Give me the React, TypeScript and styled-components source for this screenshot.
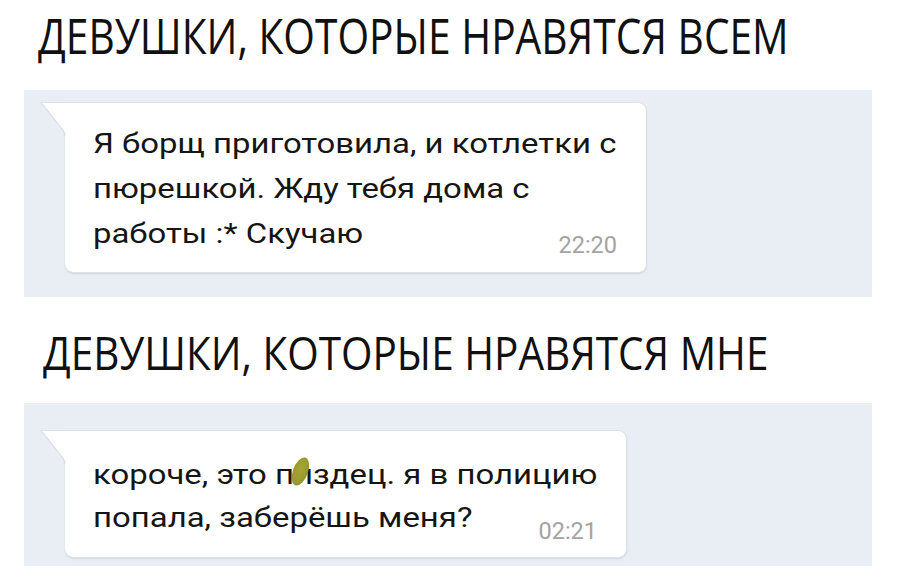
import React from "react";
import styled, { createGlobalStyle } from "styled-components";

const GlobalStyle = createGlobalStyle`
  html, body {
    margin: 0;
    padding: 0;
    background: #ffffff;
  }
  body {
    width: 898px;
    height: 588px;
    overflow: hidden;
    font-family: Roboto, "Noto Sans", sans-serif;
  }
`;

const Page = styled.div`
  display: flex;
  flex-direction: column;
  width: 898px;
  height: 588px;
  overflow: hidden;
`;

const Title = styled.h1<{ $size: number; $scale: number; $left: number; $top: number; $bottom: number }>`
  margin: ${(p) => p.$top}px 0 ${(p) => p.$bottom}px ${(p) => p.$left}px;
  font-family: "Open Sans", "Noto Sans", sans-serif;
  font-weight: 400;
  font-size: ${(p) => p.$size}px;
  line-height: ${(p) => p.$size}px;
  color: #111111;
  white-space: nowrap;
  transform: scaleX(${(p) => p.$scale});
  transform-origin: left center;
`;

const Panel = styled.section<{ $padTop: number; $padBottom: number }>`
  margin: 0 26px 0 24px;
  padding: ${(p) => p.$padTop}px 0 ${(p) => p.$padBottom}px 41px;
  background: #e9eef4;
  display: flex;
`;

const Bubble = styled.div<{ $padTop: number; $padBottom: number }>`
  position: relative;
  background: #ffffff;
  border: 1px solid #dde1e7;
  border-left: none;
  border-radius: 0 9px 9px 9px;
  box-shadow: 0 1px 2px rgba(0, 0, 0, 0.1);
  padding: ${(p) => p.$padTop}px 29px ${(p) => p.$padBottom}px 28px;
`;

const Tail = styled.svg`
  position: absolute;
  left: -25px;
  top: -1px;
  width: 26px;
  height: 34px;
  overflow: visible;
`;

const Text = styled.div<{ $lh: number; $width: number }>`
  width: ${(p) => p.$width}px;
  font-family: Roboto, "Noto Sans", sans-serif;
  font-size: 28px;
  line-height: ${(p) => p.$lh}px;
  color: #151515;
  white-space: nowrap;
`;

const Line = styled.div`
  transform: scaleX(1.175);
  transform-origin: left center;
`;

const Time = styled.div<{ $shift: number }>`
  margin-top: ${(p) => p.$shift}px;
  font-family: Roboto, "Noto Sans", sans-serif;
  font-size: 23.5px;
  line-height: 23px;
  color: #a3a3a3;
  text-align: right;
`;

const Blot = styled.span`
  position: relative;
  display: inline-block;
  &::after {
    content: "";
    position: absolute;
    left: -1px;
    top: 4px;
    width: 13px;
    height: 29px;
    border-radius: 50%;
    transform: rotate(16deg);
    background: radial-gradient(ellipse at 45% 40%, #a4a634 0%, #999a2b 60%, #7d7e22 100%);
  }
`;

function BubbleTail() {
  return (
    <Tail viewBox="0 0 26 34">
      <path d="M26 0 H1 Q0 0 1.5 1.5 L23 28 Q25 31 25 34 H26 Z" fill="#ffffff" />
      <path d="M1 0.5 L23 28 Q25 31 25 34" fill="none" stroke="#d6dbe2" strokeWidth="1.2" />
      <path d="M0.5 0.5 H26" fill="none" stroke="#dde1e7" strokeWidth="1" />
    </Tail>
  );
}

export default function App() {
  return (
    <Page>
      <GlobalStyle />
      <Title $size={49} $scale={0.83} $left={38} $top={11} $bottom={30}>
        ДЕВУШКИ, КОТОРЫЕ НРАВЯТСЯ ВСЕМ
      </Title>
      <Panel $padTop={12} $padBottom={24}>
        <Bubble $padTop={18} $padBottom={15}>
          <BubbleTail />
          <Text $lh={45} $width={524}>
            <Line>Я борщ приготовила, и котлетки с</Line>
            <Line>пюрешкой. Жду тебя дома с</Line>
            <Line>работы :* Скучаю</Line>
          </Text>
          <Time $shift={-22}>22:20</Time>
        </Bubble>
      </Panel>
      <Title $size={46} $scale={0.88} $left={43} $top={32} $bottom={28}>
        ДЕВУШКИ, КОТОРЫЕ НРАВЯТСЯ МНЕ
      </Title>
      <Panel $padTop={27} $padBottom={8}>
        <Bubble $padTop={22} $padBottom={14}>
          <BubbleTail />
          <Text $lh={43} $width={504}>
            <Line>
              короче, это п<Blot>и</Blot>здец. я в полицию
            </Line>
            <Line>попала, заберёшь меня?</Line>
          </Text>
          <Time $shift={-19}>02:21</Time>
        </Bubble>
      </Panel>
    </Page>
  );
}
